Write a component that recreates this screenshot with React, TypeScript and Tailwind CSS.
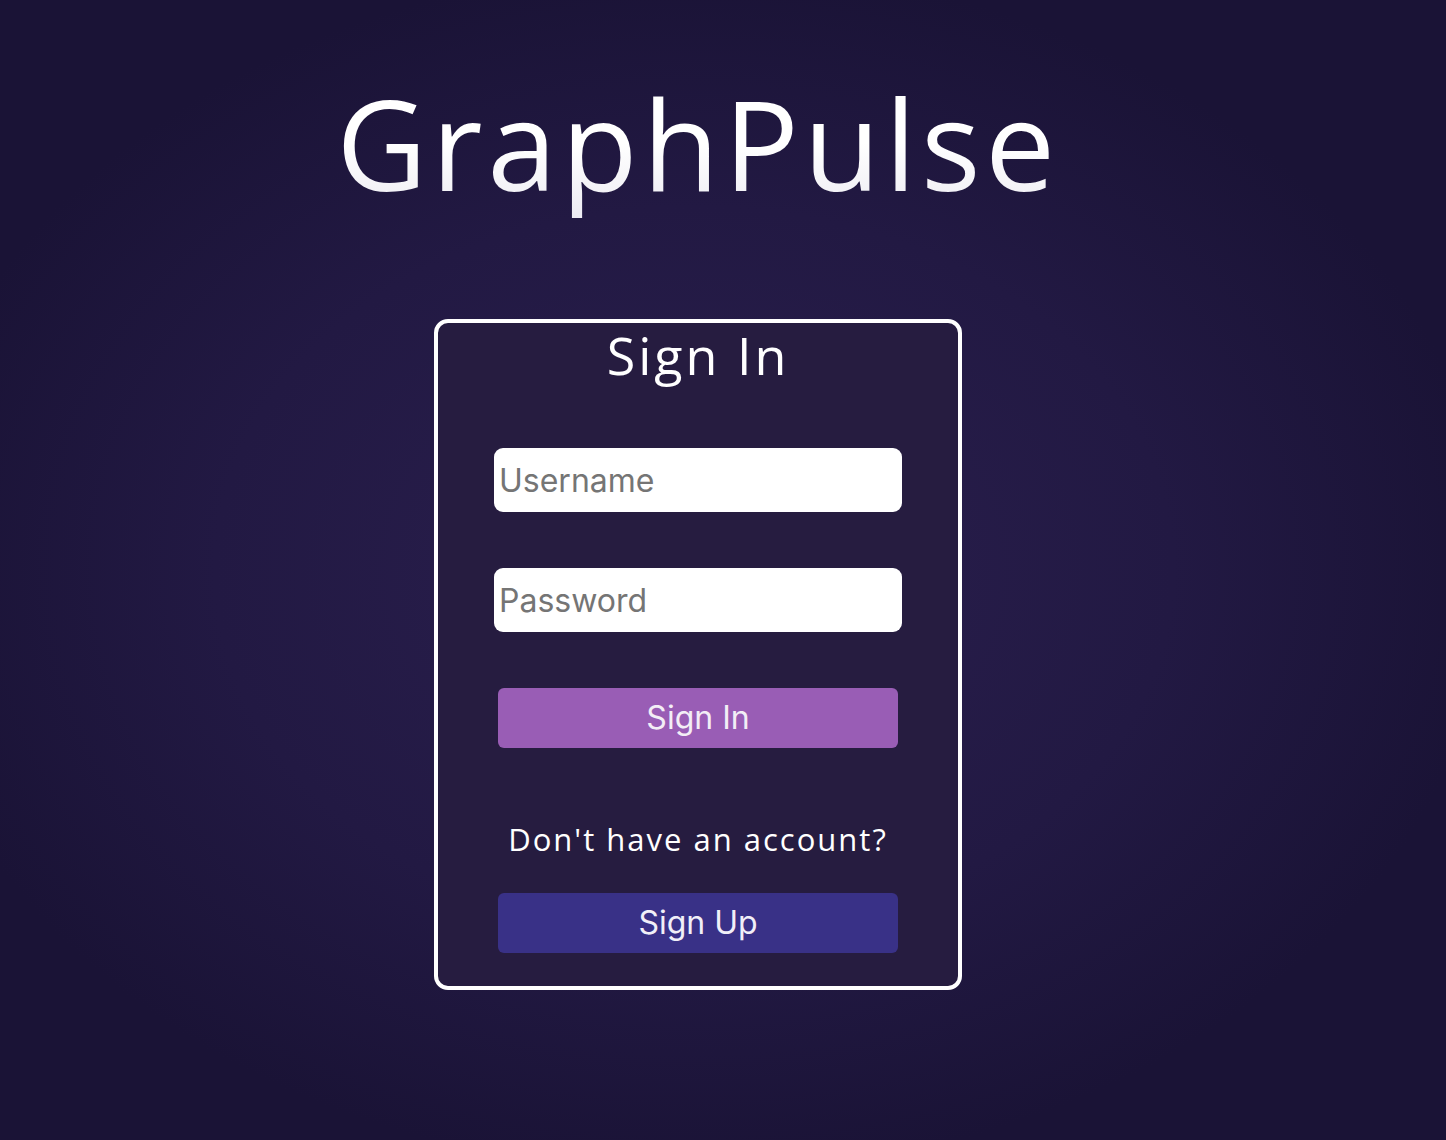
import { useState } from 'react';

export default function App() {
  const [username, setUsername] = useState('');
  const [password, setPassword] = useState('');

  return (
    <div className="min-h-screen w-full bg-[radial-gradient(ellipse_at_48%_50%,#2a1f4e_0%,#221943_45%,#1a1336_75%)] flex flex-col items-center pr-[50px]">
      <h1 className="mt-[68px] font-['Open_Sans','Noto_Sans',sans-serif] text-[125px] leading-[1.2] tracking-[4.6px] bg-gradient-to-b from-white from-50% to-[#ecebf2] bg-clip-text text-transparent">
        GraphPulse
      </h1>

      <div className="mt-[101px] w-[528px] border-4 border-white rounded-[14px] bg-[#261c40] flex flex-col items-center pb-[33px]">
        <h2 className="mt-[6px] font-['Open_Sans','Noto_Sans',sans-serif] text-white text-[52px] leading-none tracking-[3px]">
          Sign In
        </h2>

        <input
          value={username}
          onChange={(e) => setUsername(e.target.value)}
          placeholder="Username"
          className="mt-[67px] w-[408px] h-[64px] rounded-[9px] bg-white px-[5px] font-['Inter','Liberation_Sans',sans-serif] text-[32px] text-black placeholder:text-[#757575] outline-none"
        />
        <input
          type="password"
          value={password}
          onChange={(e) => setPassword(e.target.value)}
          placeholder="Password"
          className="mt-[56px] w-[408px] h-[64px] rounded-[9px] bg-white px-[5px] font-['Inter','Liberation_Sans',sans-serif] text-[32px] text-black placeholder:text-[#757575] outline-none"
        />

        <button className="mt-[56px] w-[400px] h-[60px] rounded-[6px] bg-[#995db5] font-['Inter','Liberation_Sans',sans-serif] text-[#f3eef6] text-[32px]">
          Sign In
        </button>

        <p className="mt-[76px] font-['Open_Sans','Noto_Sans',sans-serif] text-white text-[31px] leading-none tracking-[2px]">
          Don't have an account?
        </p>

        <button className="mt-[38px] w-[400px] h-[60px] rounded-[6px] bg-[#393187] font-['Inter','Liberation_Sans',sans-serif] text-[#f1eff8] text-[32px]">
          Sign Up
        </button>
      </div>
    </div>
  );
}
